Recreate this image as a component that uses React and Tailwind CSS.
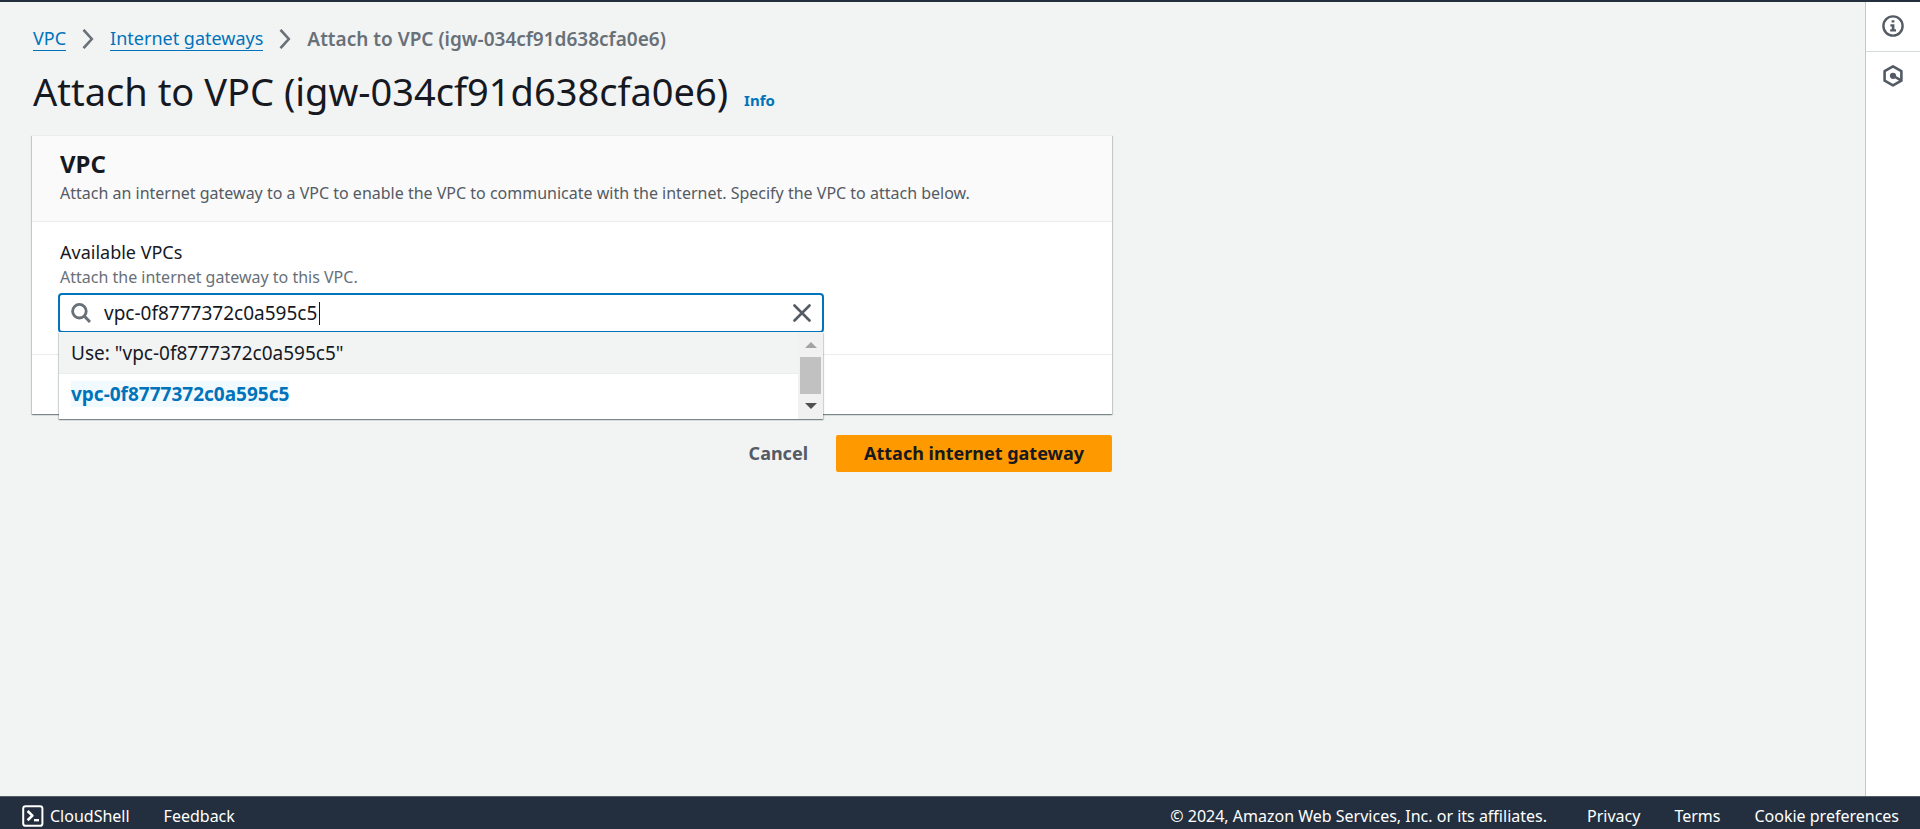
function ChevronRight() {
  return (
    <svg className="h-5 w-3 shrink-0" viewBox="0 0 12 20" fill="none" stroke="#687078" strokeWidth="2.6" aria-hidden="true">
      <path d="M1.5 0.8 L9.8 10 L1.5 19.2" />
    </svg>
  );
}

function SearchIcon() {
  return (
    <svg className="h-5 w-5 shrink-0" viewBox="0 0 20 20" fill="none" stroke="#687078" strokeWidth="2.8" aria-hidden="true">
      <circle cx="8.4" cy="8.2" r="6.8" />
      <path d="M13 12.8 L19 19" strokeWidth="3" />
    </svg>
  );
}

function CloseIcon() {
  return (
    <svg className="h-[18px] w-[18px]" viewBox="0 0 18 18" fill="none" stroke="#545b64" strokeWidth="2.6" strokeLinecap="round" aria-hidden="true">
      <path d="M1.5 1.5 L16.5 16.5 M16.5 1.5 L1.5 16.5" />
    </svg>
  );
}

function InfoIcon() {
  return (
    <svg className="h-[22px] w-[22px]" viewBox="0 0 22 22" fill="none" aria-hidden="true">
      <circle cx="11" cy="11" r="9.6" stroke="#545b64" strokeWidth="2.4" />
      <path d="M9.6 5.2 h2.8 v2.4 h-2.8 z M8.4 9.2 h4 v5 h1.6 v2.2 h-5.8 v-2.2 h1.6 v-2.8 h-1.4 z" fill="#545b64" />
    </svg>
  );
}

function HexagonIcon() {
  return (
    <svg className="h-[22px] w-[22px]" viewBox="0 0 22 22" fill="none" aria-hidden="true">
      <path d="M11 1.4 L19.4 6.1 V15.7 L11 20.4 L2.6 15.7 V6.1 Z" stroke="#545b64" strokeWidth="2.6" strokeLinejoin="round" />
      <circle cx="11" cy="10.8" r="3.1" fill="#545b64" />
      <path d="M11.5 11 L18.6 15.2" stroke="#545b64" strokeWidth="2.6" />
    </svg>
  );
}

function CloudShellIcon() {
  return (
    <svg className="h-[22px] w-[22px]" viewBox="0 0 22 22" fill="none" stroke="#fff" strokeWidth="2" aria-hidden="true">
      <rect x="1.2" y="1.2" width="19.2" height="19.6" rx="2.4" />
      <path d="M5.6 6 L10.4 10.6 L5.6 15.2" strokeWidth="2.6" strokeLinejoin="round" />
      <path d="M12 15.2 H17" strokeWidth="2.4" />
    </svg>
  );
}

function ScrollTrack() {
  return (
    <div className="flex w-[25px] shrink-0 flex-col items-center bg-[#f1f1f1] py-[10px]" aria-hidden="true">
      <svg className="h-[6px] w-[12px] shrink-0" viewBox="0 0 12 6"><path d="M6 0 L12 6 H0 Z" fill="#a3a3a3" /></svg>
      <div className="mt-[9px] h-[37px] w-[21px] bg-[#c1c1c1]" />
      <svg className="mt-auto h-[6px] w-[12px] shrink-0" viewBox="0 0 12 6"><path d="M0 0 H12 L6 6 Z" fill="#505050" /></svg>
    </div>
  );
}

export default function App() {
  return (
    <div className="flex min-h-screen flex-col bg-[#f2f3f3] font-['Noto_Sans','Open_Sans',sans-serif] text-[#16191f]">
      <div className="h-[2px] bg-[#232f3e]" />
      <div className="flex flex-1">
        <main className="flex-1 px-8 pt-6">
          <div className="pl-px">
            <nav aria-label="Breadcrumbs">
              <ol className="flex items-center gap-4 text-[18px] leading-6">
                <li><a href="#vpc" className="block border-b border-[#0073bb] text-[#0073bb]">VPC</a></li>
                <li><ChevronRight /></li>
                <li><a href="#gateways" className="block border-b border-[#0073bb] text-[#0073bb]">Internet gateways</a></li>
                <li><ChevronRight /></li>
                <li className="text-[19px] font-semibold text-[#687078]">Attach to VPC (igw-034cf91d638cfa0e6)</li>
              </ol>
            </nav>
            <div className="mt-[18px] flex items-baseline gap-4">
              <h1 className="text-[38px] leading-[44px]">Attach to VPC (igw-034cf91d638cfa0e6)</h1>
              <a href="#info" className="text-[15px] font-bold text-[#0073bb]">Info</a>
            </div>
          </div>

          <form className="mt-[22px] max-w-[1080px]" onSubmit={(e) => e.preventDefault()}>
            <section className="border-t border-[#eaeded] bg-white shadow-[0_1px_1px_0_rgba(0,28,36,0.3),1px_1px_1px_0_rgba(0,28,36,0.15),-1px_1px_1px_0_rgba(0,28,36,0.15)]">
              <header className="border-b border-[#eaeded] bg-[#fafafa] px-7 pt-[14px] pb-4">
                <h2 className="text-[24px] leading-7 font-bold">VPC</h2>
                <p className="mt-[3px] text-[16px] leading-6 text-[#545b64]">
                  Attach an internet gateway to a VPC to enable the VPC to communicate with the internet. Specify the VPC to attach below.
                </p>
              </header>
              <div className="px-7 pt-[18px] pb-[23px]">
                <label htmlFor="vpc" className="block text-[18px] leading-6">Available VPCs</label>
                <p id="vpc-hint" className="mt-px text-[16px] leading-6 text-[#687078]">Attach the internet gateway to this VPC.</p>
                <div className="relative mt-[6px] max-w-[762px]">
                  <div className="flex h-9 items-center rounded-xs bg-white px-[11px] ring-2 ring-[#0073bb]">
                    <SearchIcon />
                    <div className="relative ml-[13px] flex-1">
                      <input
                        id="vpc"
                        type="text"
                        role="combobox"
                        aria-expanded="true"
                        aria-controls="vpc-options"
                        aria-describedby="vpc-hint"
                        defaultValue="vpc-0f8777372c0a595c5"
                        className="block w-full text-[19px] leading-[26px] caret-transparent outline-none"
                      />
                      <span className="absolute top-[2px] left-[215px] h-[23px] w-px bg-[#16191f]" aria-hidden="true" />
                    </div>
                    <button type="button" aria-label="Clear"><CloseIcon /></button>
                  </div>
                  <div className="absolute -inset-x-px top-full mt-px flex bg-white shadow-[0_1px_1px_0_rgba(0,28,36,0.3),1px_1px_1px_0_rgba(0,28,36,0.15),-1px_1px_1px_0_rgba(0,28,36,0.15)]">
                    <ul id="vpc-options" role="listbox" className="flex-1 text-[19px] leading-[26px]">
                      <li role="option" aria-selected="false" className="border-b border-[#eaeded] bg-[#f2f3f3] px-3 pt-2 pb-[7px]">
                        Use: "vpc-0f8777372c0a595c5"
                      </li>
                      <li role="option" aria-selected="false" className="px-3 pt-[7px] pb-3 font-bold text-[#0073bb]">
                        <span className="bg-[#f1faff]">vpc-0f8777372c0a595c5</span>
                      </li>
                    </ul>
                    <ScrollTrack />
                  </div>
                </div>
              </div>
              <div className="h-[60px] border-t border-[#eaeded]" />
            </section>
            <div className="mt-[21px] flex justify-end gap-7 text-[18px] leading-[25px] font-bold">
              <button type="button" className="text-[#545b64]">Cancel</button>
              <button type="submit" className="rounded-xs bg-[#ff9900] px-7 py-[6px]">Attach internet gateway</button>
            </div>
          </form>
        </main>
        <aside className="w-[55px] border-l border-[#c3c8c9] bg-white">
          <button type="button" aria-label="Info panel" className="flex h-[50px] w-full items-center justify-center border-b border-[#d5dbdb] pb-px"><InfoIcon /></button>
          <button type="button" aria-label="Resources panel" className="flex h-12 w-full items-center justify-center"><HexagonIcon /></button>
        </aside>
      </div>
      <footer className="flex h-[33px] items-end border-t border-[#545b64] bg-[#232f3e] pr-[21px] pl-[22px] text-[16px] leading-[26px] text-white">
        <a href="#cloudshell" className="flex items-center gap-[6px]"><CloudShellIcon />CloudShell</a>
        <a href="#feedback" className="ml-[34px]">Feedback</a>
        <span className="ml-auto">© 2024, Amazon Web Services, Inc. or its affiliates.</span>
        <a href="#privacy" className="ml-10">Privacy</a>
        <a href="#terms" className="ml-[34px]">Terms</a>
        <a href="#cookies" className="ml-[34px]">Cookie preferences</a>
      </footer>
    </div>
  );
}
